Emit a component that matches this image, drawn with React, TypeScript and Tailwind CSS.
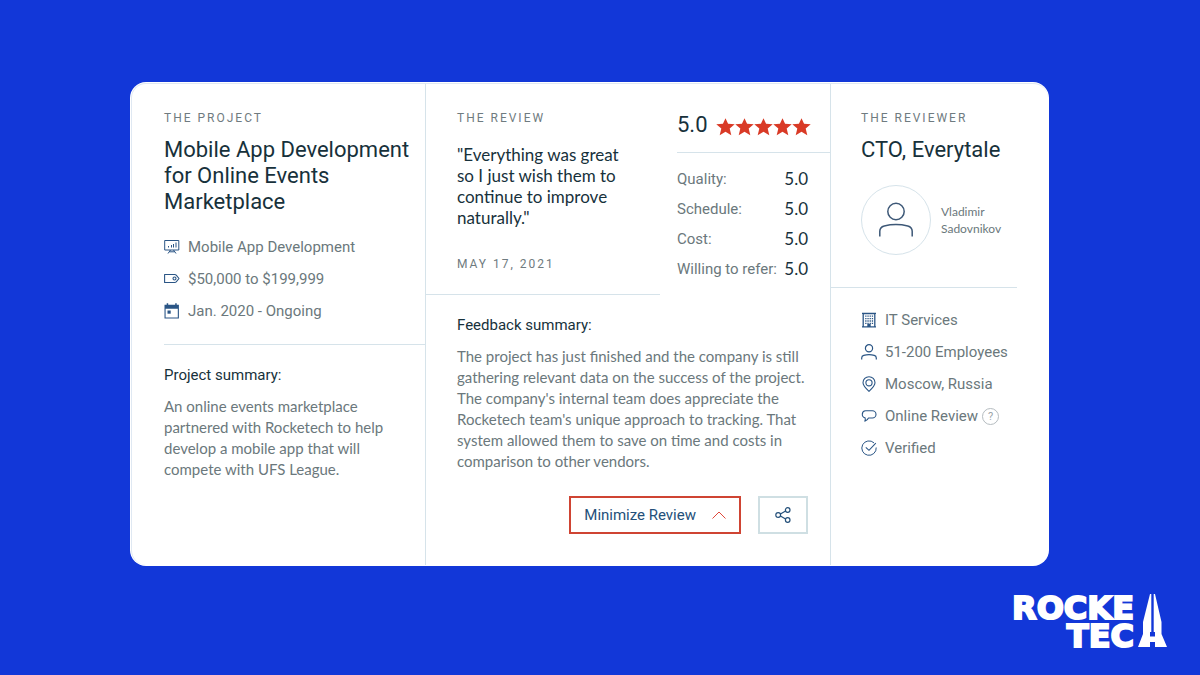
import React from 'react';

interface IconProps {
  className?: string;
}

interface DetailItem {
  icon: React.FC<IconProps>;
  text: string;
  hint?: boolean;
}

const PresentationIcon: React.FC<IconProps> = ({ className }) => (
  <svg viewBox="0 0 16 16" className={className} fill="none" stroke="currentColor" aria-hidden="true">
    <path d="M.7 1.500h14.100v9.500H.7zM6.500 11 4 14.500M9.500 11l2.500 3.500M5.500 12.800h5" />
    <path d="M4.500 7v1.500M7.500 6v2.500M9.500 5v3.500M12 3.500v5" />
  </svg>
);

const TagIcon: React.FC<IconProps> = ({ className }) => (
  <svg viewBox="0 0 16 16" className={className} fill="none" stroke="currentColor" strokeWidth="1.1" aria-hidden="true">
    <path d="M.6 3.500h10.200c.6 0 1 .2 1.400.6L15 7.500l-2.800 3.400c-.4.4-.8.6-1.400.6H.6z" strokeLinejoin="round" />
    <circle cx="10.500" cy="7.500" r="1.500" />
  </svg>
);

const CalendarIcon: React.FC<IconProps> = ({ className }) => (
  <svg viewBox="0 0 16 16" className={className} fill="currentColor" aria-hidden="true">
    <path d="M.5 1.700h2.200V.3h1.500v1.400h7V.3h1.500v1.400h2.200v13.800H.5zm1.100 4v8.700h12.200V5.700z" fillRule="evenodd" />
    <path d="M3.500 7.500h3.200v3.200H3.500z" />
  </svg>
);

const BuildingIcon: React.FC<IconProps> = ({ className }) => (
  <svg viewBox="0 0 16 16" className={className} fill="none" stroke="currentColor" aria-hidden="true">
    <path d="M2.2 14.500V1.500h11.600v13M1 1.300h14M1 14.800h14" strokeWidth="1.300" />
    <path d="M4.200 4.200h8M4.200 6.600h8M4.200 9h8M4.200 11.400h8" strokeWidth="1.300" strokeDasharray="1.300 .9" />
    <path d="M6.300 12h3.400v3H6.300z" fill="currentColor" stroke="none" />
  </svg>
);

const PersonIcon: React.FC<IconProps> = ({ className }) => (
  <svg viewBox="0 0 16 16" className={className} fill="none" stroke="currentColor" strokeWidth="1.2" aria-hidden="true">
    <circle cx="8" cy="4.300" r="3.600" />
    <path d="M.7 15.500v-1.600c0-1.400.8-2.200 2-2.500 3.400-.9 7.200-.9 10.600 0 1.200.3 2 1.100 2 2.500v1.600" />
  </svg>
);

const PinIcon: React.FC<IconProps> = ({ className }) => (
  <svg viewBox="0 0 16 16" className={className} fill="none" stroke="currentColor" strokeWidth="1.1" aria-hidden="true">
    <path d="M8 15.300C4.500 12 2 9.600 2 6.700a6 6 0 0 1 12 0c0 2.900-2.500 5.300-6 8.600z" />
    <circle cx="8" cy="6.800" r="3.100" />
  </svg>
);

const ChatIcon: React.FC<IconProps> = ({ className }) => (
  <svg viewBox="0 0 16 16" className={className} fill="none" stroke="currentColor" strokeWidth="1.1" strokeLinejoin="round" aria-hidden="true">
    <path d="M4.600 2.800h6.800a3.600 3.600 0 0 1 0 7.200H7.500c-.8 1.700-1.900 2.700-3.700 3.200.6-1.100.7-2.300.3-3.300A3.600 3.600 0 0 1 4.600 2.800z" />
  </svg>
);

const VerifiedIcon: React.FC<IconProps> = ({ className }) => (
  <svg viewBox="0 0 16 16" className={className} fill="none" stroke="currentColor" aria-hidden="true">
    <path d="M13 2.900A7.200 7.200 0 1 0 15.200 7.500" />
    <path d="M4.800 7.300 8 10.300l6.800-7.100" strokeWidth="1.100" />
  </svg>
);

const ShareIcon: React.FC<IconProps> = ({ className }) => (
  <svg viewBox="0 0 16 16" className={className} fill="none" stroke="currentColor" strokeWidth="1.2" aria-hidden="true">
    <circle cx="3.200" cy="8" r="2.400" />
    <circle cx="12.700" cy="3" r="2.300" />
    <circle cx="12.700" cy="13" r="2.300" />
    <path d="m5.400 7 5.200-2.900M5.400 9.100l5.200 2.900" />
  </svg>
);

const StarIcon: React.FC<IconProps> = ({ className }) => (
  <svg viewBox="0 0 20 20" className={className} fill="currentColor" aria-hidden="true">
    <path d="M10 1.200l2.700 6 7 .5-5.300 4.500 1.700 7-6.100-3.700-6.100 3.700 1.700-7L.3 7.700l7-.5z" />
  </svg>
);

const projectDetails: DetailItem[] = [
  { icon: PresentationIcon, text: 'Mobile App Development' },
  { icon: TagIcon, text: '$50,000 to $199,999' },
  { icon: CalendarIcon, text: 'Jan. 2020 - Ongoing' },
];

const reviewerDetails: DetailItem[] = [
  { icon: BuildingIcon, text: 'IT Services' },
  { icon: PersonIcon, text: '51-200 Employees' },
  { icon: PinIcon, text: 'Moscow, Russia' },
  { icon: ChatIcon, text: 'Online Review', hint: true },
  { icon: VerifiedIcon, text: 'Verified' },
];

const scores = [
  { label: 'Quality:', value: '5.0' },
  { label: 'Schedule:', value: '5.0' },
  { label: 'Cost:', value: '5.0' },
  { label: 'Willing to refer:', value: '5.0' },
];

const Label: React.FC<{ children: React.ReactNode }> = ({ children }) => (
  <p className="text-[12px] leading-4 tracking-[2px] text-[#6f7b80] uppercase">{children}</p>
);

const DetailList: React.FC<{ items: DetailItem[] }> = ({ items }) => (
  <ul className="flex flex-col gap-3">
    {items.map(({ icon: Icon, text, hint }) => (
      <li key={text} className="flex items-center gap-2 text-[15px] leading-5 text-[#6b787c]">
        <Icon className="size-4 shrink-0 text-[#2a5585]" />
        <span className="whitespace-nowrap">{text}</span>
        {hint && (
          <button
            type="button"
            aria-label="About online reviews"
            className="-ml-1 flex size-[17px] items-center justify-center rounded-full border border-[#b5bcc0] text-[11px] leading-none text-[#9aa3a8]"
          >
            ?
          </button>
        )}
      </li>
    ))}
  </ul>
);

const ProjectColumn: React.FC = () => (
  <section className="border-r border-[#d6e3ea] pt-[26px] pb-8 pl-8">
    <Label>The Project</Label>
    <h2 className="mt-[11px] mb-[22px] text-[22px] leading-[26px] text-[#17313b]">
      Mobile App Development for Online Events Marketplace
    </h2>
    <DetailList items={projectDetails} />
    <hr className="mt-[23px] mb-5 border-[#d6e3ea]" />
    <h3 className="text-[15px] leading-5 text-[#17313b]">Project summary:</h3>
    <p className="mt-[11px] pr-8 font-[Lato,sans-serif] text-[15px] leading-[21px] text-[#6b787c]">
      An online events marketplace partnered with Rocketech to help develop a mobile app that will
      compete with UFS League.
    </p>
  </section>
);

const Ratings: React.FC = () => (
  <div className="pt-[26px]">
    <div className="flex items-center gap-2 border-b border-[#d6e3ea] pb-3">
      <span className="text-[22px] leading-[30px] text-[#17313b]">5.0</span>
      <span className="flex pt-0.5 text-[#d93a26]" role="img" aria-label="5 out of 5 stars">
        {[1, 2, 3, 4, 5].map((star) => (
          <StarIcon key={star} className="size-[19px]" />
        ))}
      </span>
    </div>
    <dl className="flex flex-col gap-[10px] pt-4 pr-[22px]">
      {scores.map(({ label, value }) => (
        <div key={label} className="flex items-center justify-between leading-5">
          <dt className="text-[15px] whitespace-nowrap text-[#6b787c]">{label}</dt>
          <dd className="font-[Lato,sans-serif] text-[17px] text-[#17313b]">{value}</dd>
        </div>
      ))}
    </dl>
  </div>
);

const ReviewColumn: React.FC = () => (
  <section className="border-r border-[#d6e3ea]">
    <div className="grid grid-cols-[234fr_153fr] gap-[17px]">
      <div className="border-b border-[#d6e3ea] pt-[26px] pb-[22px] pl-[31px]">
        <Label>The Review</Label>
        <blockquote className="mt-[18px] mb-7 pr-[30px] font-[Lato,sans-serif] text-[17px] leading-[21px] text-[#17313b]">
          "Everything was great so I just wish them to continue to improve naturally."
        </blockquote>
        <Label>May 17, 2021</Label>
      </div>
      <Ratings />
    </div>
    <div className="pt-5 pr-[22px] pb-[31px] pl-[31px]">
      <h3 className="text-[15px] leading-5 text-[#17313b]">Feedback summary:</h3>
      <p className="mt-[11px] font-[Lato,sans-serif] text-[15px] leading-[21px] text-[#6b787c]">
        The project has just finished and the company is still gathering relevant data on the success of
        the project. The company's internal team does appreciate the Rocketech team's unique approach to
        tracking. That system allowed them to save on time and costs in comparison to other vendors.
      </p>
      <div className="mt-6 flex justify-end gap-[17px]">
        <button
          type="button"
          className="flex h-[38px] items-center gap-4 border-2 border-[#cf4433] px-[13px] text-[15px] text-[#24507a]"
        >
          Minimize Review
          <svg viewBox="0 0 14 8" className="h-2 w-[14px] text-[#e0473a]" fill="none" stroke="currentColor" aria-hidden="true">
            <path d="m.5 7.500 6.500-6.500 6.500 6.500" />
          </svg>
        </button>
        <button
          type="button"
          aria-label="Share"
          className="flex h-[38px] w-[50px] items-center justify-center border-2 border-[#cfdfe3] text-[#24507a]"
        >
          <ShareIcon className="size-4" />
        </button>
      </div>
    </div>
  </section>
);

const ReviewerColumn: React.FC = () => (
  <section>
    <div className="mr-[31px] border-b border-[#d6e3ea] pt-[26px] pb-8 pl-[30px]">
      <Label>The Reviewer</Label>
      <h2 className="mt-[11px] mb-[22px] text-[22px] leading-[26px] whitespace-nowrap text-[#17313b]">CTO, Everytale</h2>
      <div className="flex items-center gap-[10px]">
        <div className="flex size-[70px] shrink-0 items-center justify-center rounded-full border border-[#d6e3ea]">
          <svg viewBox="0 0 36 36" className="size-9 text-[#3d5877]" fill="none" stroke="currentColor" strokeWidth="1.500" aria-hidden="true">
            <circle cx="18" cy="9.500" r="8.200" />
            <path d="M1.800 34.500v-5.200c0-3 1.600-4.700 4.400-5.400 7.500-1.700 16-1.700 23.600 0 2.800.7 4.400 2.400 4.400 5.400v5.200" />
          </svg>
        </div>
        <p className="font-[Lato,sans-serif] text-[12px] leading-[17px] text-[#6b787c]">Vladimir Sadovnikov</p>
      </div>
    </div>
    <div className="pt-[22px] pb-8 pl-[30px]">
      <DetailList items={reviewerDetails} />
    </div>
  </section>
);

const Logo: React.FC = () => (
  <a href="#" aria-label="Rocketech" className="flex items-end gap-1 text-white">
    <span className="text-right font-['DejaVu_Sans',sans-serif] text-[32px] leading-7 font-bold [-webkit-text-stroke:2px_white]">
      ROCKE
      <br />
      TEC
    </span>
    <svg viewBox="0 0 29 53" className="mb-[3px] h-[53px] w-[29px]" fill="currentColor" aria-hidden="true">
      <path d="M12 0h1.300v38H12v4.500h5V38h-1.300V0H17l6.500 28v12L29 53H17v-5h-5v5H0l5-13V28z" />
    </svg>
  </a>
);

export default function App() {
  return (
    <div className="flex min-h-screen flex-col bg-[#1237d8] font-[Roboto,sans-serif]">
      <main className="pt-[82px] pr-[151px] pl-[130px]">
        <article className="rounded-2xl bg-white p-px">
          <div className="grid grid-cols-[294fr_405fr_217fr] rounded-[15px] border-t border-l border-[#dfe8f2]">
            <ProjectColumn />
            <ReviewColumn />
            <ReviewerColumn />
          </div>
        </article>
      </main>
      <footer className="mt-auto flex justify-end pr-[33px] pb-[25px]">
        <Logo />
      </footer>
    </div>
  );
}
